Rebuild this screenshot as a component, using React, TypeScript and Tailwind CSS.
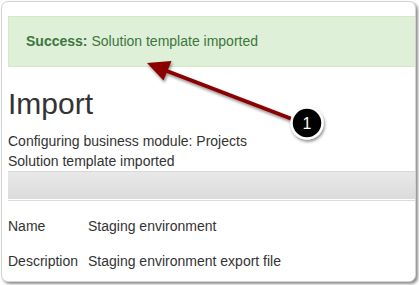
export default function App() {
  return (
    <div className="relative w-[419px] h-[285px] bg-white overflow-hidden font-['Liberation_Sans',Arial,sans-serif] text-[14px] text-[#333]">
      <div className="pl-[1px] pt-[1px]">
        {/* Card */}
        <div className="w-[415px] h-[281px] overflow-hidden rounded-[7px] border border-[#d4d4d4] bg-white pl-[6px] pt-[14px] shadow-[2px_2px_3px_rgba(0,0,0,0.45)]">
          <div className="w-[420px]">
            {/* Alert */}
            <div className="flex h-[51px] items-center border border-[#d6e9c6] bg-[#dff0d8] pl-[17px] text-[#3c763d]">
              <span className="font-bold">Success:</span>
              <span className="ml-[4px]">Solution template imported</span>
            </div>

            <h1 className="mt-[20px] mb-[11px] text-[30px] leading-[33px] text-[#333]">Import</h1>
            <p className="leading-[20px]">Configuring business module: Projects</p>
            <p className="leading-[20px]">Solution template imported</p>

            {/* Toolbar */}
            <div className="h-[28px] border-t border-[#d8d8d8] bg-gradient-to-b from-[#e9e9e9] to-[#dbdbdb]" />
            <div className="h-[1px] bg-white" />
            <div className="h-[1px] bg-[#dcdcdc]" />

            {/* Details */}
            <div className="mt-[8px]">
              <div className="flex h-[35px] items-center">
                <span className="w-[80px]">Name</span>
                <span>Staging environment</span>
              </div>
              <div className="flex h-[35px] items-center">
                <span className="w-[80px]">Description</span>
                <span>Staging environment export file</span>
              </div>
            </div>
          </div>
        </div>
      </div>

      {/* Annotation */}
      <svg className="pointer-events-none absolute left-0 top-0" width="419" height="285" viewBox="0 0 419 285">
        <defs>
          <filter id="sh" x="-20%" y="-20%" width="140%" height="140%">
            <feDropShadow dx="1" dy="2" stdDeviation="1.5" floodColor="#000" floodOpacity="0.45" />
          </filter>
        </defs>
        <g filter="url(#sh)">
          <line x1="292" y1="119" x2="163" y2="69.5" stroke="#8b0000" strokeWidth="4" />
          <polygon points="147,63 163.5,80.5 171.5,61" fill="#8b0000" />
        </g>
        <g filter="url(#sh)">
          <circle cx="307" cy="123" r="15.5" fill="#000" stroke="#fff" strokeWidth="2.5" />
        </g>
        <text x="307" y="129" textAnchor="middle" fill="#fff" fontSize="16" fontFamily="Liberation Sans, Arial, sans-serif">
          1
        </text>
      </svg>
    </div>
  );
}
